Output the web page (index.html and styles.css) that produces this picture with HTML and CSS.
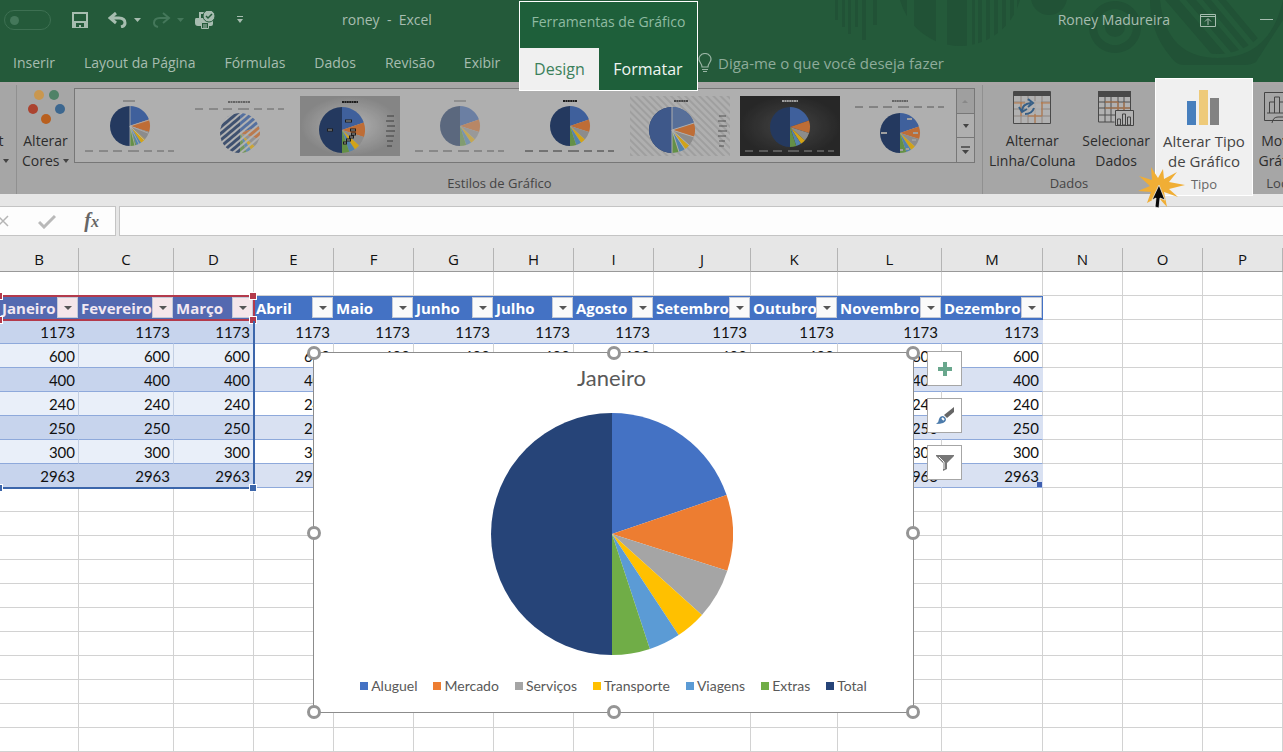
FILE: index.html
```html
<!DOCTYPE html>
<html lang="pt-BR">
<head>
<meta charset="utf-8">
<title>roney - Excel</title>
<link rel="stylesheet" href="styles.css">
</head>
<body>
<svg class="defs" aria-hidden="true">
  <defs>
    <symbol id="pie" viewBox="0 0 100 100">
      <path d="M50 50V0A50 50 0 0 1 97.350 33.930z" fill="#4472c4"/>
      <path d="M50 50L97.350 33.930A50 50 0 0 1 97.630 65.210z" fill="#ed7d31"/>
      <path d="M50 50L97.630 65.210A50 50 0 0 1 87.160 83.460z" fill="#a5a5a5"/>
      <path d="M50 50L87.160 83.460A50 50 0 0 1 77.530 91.740z" fill="#ffc000"/>
      <path d="M50 50L77.530 91.740A50 50 0 0 1 65.640 97.490z" fill="#5b9bd5"/>
      <path d="M50 50L65.640 97.490A50 50 0 0 1 50 100z" fill="#70ad47"/>
      <path d="M50 0v100A50 50 0 0 1 50 0z" fill="#264478"/>
    </symbol>
    <symbol id="lines" viewBox="0 0 100 4">
      <path d="M5 2h8m6 0h9m5 0h9m6 0h11m5 0h8m5 0h7m4 0h6" stroke="currentColor" stroke-width="1" fill="none" opacity=".75"/>
    </symbol>
    <symbol id="side" viewBox="0 0 12 34">
      <path d="M3 2h7M2 7h8M3 12h8M2 17h9M2 22h8M3 27h6M3 32h5" stroke="currentColor" stroke-width="1" fill="none" opacity=".7"/>
    </symbol>
    <pattern id="hatch" width="5" height="5" patternUnits="userSpaceOnUse" patternTransform="rotate(-40)"><rect width="5" height="2" fill="#d0d0d0"/></pattern>
    <pattern id="hatchBg" width="5" height="5" patternUnits="userSpaceOnUse" patternTransform="rotate(45)"><rect width="5" height="2" fill="#bbb"/></pattern>
    <radialGradient id="light"><stop offset="0" stop-color="#d2d2d2"/><stop offset="1" stop-color="#9c9c9c"/></radialGradient>
    <radialGradient id="dark"><stop offset="0" stop-color="#505050"/><stop offset="1" stop-color="#2e2e2e"/></radialGradient>
  </defs>
</svg>

<header class="top">
  <svg class="deco" width="460" height="82" viewBox="0 0 460 82" aria-hidden="true">
    <defs><clipPath id="disc"><circle cx="137" cy="-16" r="62"/></clipPath><clipPath id="disc2"><circle cx="395" cy="-4" r="58"/></clipPath></defs>
    <g fill="#215236">
      <path d="M12 0h3v20h-3zM19 0h3v27h-3zM25 0h3v34h-3zM32 0h3v27h-3zM39 0h4v40h-4zM50 0h4v25h-4z"/>
      <g clip-path="url(#disc)"><path d="M74 0h10v50H74zM91 0h22v50H91zM124 0h20v50h-20zM149 0h3v50h-3zM155 0h4v50h-4zM163 0h4v50h-4zM171 0h4v50h-4zM179 0h4v50h-4zM187 0h4v50h-4zM194 0h4v50h-4z"/></g>
      <circle cx="226" cy="-3" r="18"/>
      <path fill-rule="evenodd" d="M292 1a26 26 0 1 0 .1 0zM292 9a18 18 0 1 1-.1 0z"/>
      <circle cx="292" cy="27" r="10"/>
      <path fill-rule="evenodd" d="M327 0h133v20l-27 42q-5 3-12 3h-60q-8 0-14-9-20-24-20-56zM337 0q6 58 58 58 52 0 65-58z"/>
      <g clip-path="url(#disc2)"><path d="M337-6h14l60 70h-14zM358-6h10l60 70h-10zM375-6h8l55 66h-8zM390-6h8l50 60h-8z"/></g>
    </g>
  </svg>
  <div class="top-left">
    <div class="quick">
      <button class="toggle" aria-label="Salvamento automático"></button>
      <button class="q save" aria-label="Salvar"><svg width="16" height="16" viewBox="0 0 16 16"><path d="M1 1h14v14H1z" fill="none" stroke="#a7bdb0" stroke-width="2"/><path d="M2 9h12v6H2z" fill="#a7bdb0"/><path d="M4 11h8v4H9v-2H7v2H4z" fill="#245a3a"/></svg></button>
      <button class="q undo" aria-label="Desfazer"><svg width="20" height="16" viewBox="0 0 20 16"><path d="M8 1L2 6l6 5M3 6h8q6 0 6 5 0 3-4 4" fill="none" stroke="#a7bdb0" stroke-width="3"/></svg><svg width="8" height="5" viewBox="0 0 8 5"><path d="M0 0h7L3.500 4z" fill="#a7bdb0"/></svg></button>
      <button class="q redo" aria-label="Refazer"><svg width="20" height="16" viewBox="0 0 20 16"><path d="M12 1l6 5-6 5M17 6H9q-6 0-6 5 0 3 4 4" fill="none" stroke="#44775a" stroke-width="2"/></svg><svg width="8" height="5" viewBox="0 0 8 5"><path d="M0 0h7L3.500 4z" fill="#44775a"/></svg></button>
      <button class="q print" aria-label="Visualizar impressão"><svg width="20" height="19" viewBox="0 0 20 19"><path d="M5 8V2h6" fill="none" stroke="#a7bdb0" stroke-width="2"/><path d="M1 7h17v6q0 2-2 2h-2v-3H6v3H3q-3 0-3-3V9q0-2 1-2z" fill="#a7bdb0"/><path d="M6.500 11.500h7v6h-7zM8 14h4M8 16h4" fill="#245a3a" stroke="#a7bdb0"/><circle cx="14" cy="5" r="6" fill="#a7bdb0" stroke="#245a3a"/><path d="M11 5l2 2 4-4" fill="none" stroke="#245a3a" stroke-width="1.500"/></svg></button>
      <button class="q more" aria-label="Personalizar"><svg width="6" height="8" viewBox="0 0 6 8"><path d="M0 .5h6" stroke="#a7bdb0"/><path d="M0 3h6L3 7z" fill="#a7bdb0"/></svg></button>
      <span class="doc">roney&nbsp; -&nbsp; Excel</span>
    </div>
    <nav class="tabs">
      <button>Inserir</button><button>Layout da Página</button><button>Fórmulas</button><button>Dados</button><button>Revisão</button><button>Exibir</button>
    </nav>
  </div>
  <section class="context">
    <div class="context-title">Ferramentas de Gráfico</div>
    <div class="context-tabs"><button class="active">Design</button><button>Formatar</button></div>
  </section>
  <div class="top-right">
    <div class="account">
      <span>Roney Madureira</span>
      <button aria-label="Opções da faixa"><svg width="16" height="13" viewBox="0 0 16 13"><path d="M.5.5h15v12H.5zM.5 2.500h15M8 11V5M5 7.500l3-3 3 3" fill="none" stroke="#a7bdb0"/></svg></button>
      <button aria-label="Minimizar"><svg width="13" height="2" viewBox="0 0 13 2"><path d="M0 .5h13" stroke="#a7bdb0"/></svg></button>
    </div>
    <button class="tell"><svg width="14" height="20" viewBox="0 0 14 20"><path d="M4 14q0-2-2-5Q0 6 2 3q2-2.500 5-2.500T12 3q2 3 0 6-2 3-2 5zM4 16.500h6M5 18.500h4" fill="none" stroke="#9ab5a5" stroke-width="1.200"/></svg>Diga-me o que você deseja fazer</button>
  </div>
</header>

<section class="ribbon">
  <div class="group cut-left">
    <button class="big"><span>Layout</span><span>Rápido <i class="caret"></i></span></button>
  </div>
  <div class="group styles">
    <div class="tools">
      <button class="big colors"><svg width="38" height="36" viewBox="0 0 38 36"><circle cx="12" cy="5" r="5" fill="#c9974f"/><circle cx="27" cy="5" r="5" fill="#4f8267"/><circle cx="6" cy="19" r="5" fill="#ab432f"/><circle cx="33" cy="19" r="5" fill="#3c678f"/><circle cx="19" cy="29" r="5" fill="#b85f1e"/></svg><span>Alterar</span><span>Cores <i class="caret"></i></span></button>
      <div class="gallery">
        <button aria-label="Estilo 1"><svg viewBox="0 0 100 60"><path d="M43 5h12" stroke="#777"/><use href="#pie" x="10" y="10" width="80" height="40"/><path d="M50 30V10M50 30l19-6M50 30l18 7M50 30l14 14M50 30l9 18M50 30l5 20M50 30v20" stroke="#d0d0d0" stroke-width=".8"/><use href="#lines" y="53" width="100" height="4" color="#555"/></svg></button>
        <button aria-label="Estilo 2"><svg viewBox="0 0 100 60"><path d="M38 6h22" stroke="#777" stroke-width="2" stroke-dasharray="2 .5"/><use href="#lines" y="11" width="100" height="4" color="#555"/><use href="#pie" x="10" y="17" width="80" height="40" opacity=".8"/><circle cx="50" cy="37" r="20.500" fill="url(#hatch)"/></svg></button>
        <button aria-label="Estilo 3"><svg viewBox="0 0 100 60"><path d="M0 0h100v60H0z" fill="url(#light)"/><path d="M42 6h16" stroke="#222" stroke-width="2" stroke-dasharray="2 .4"/><use href="#pie" x="19" y="11" width="46" height="46"/><path d="M27 34h6M45 25h7M50 34h6M51 38h5M49 41h5M46 44h5M43 47h4" stroke="#222" stroke-width="3" fill="none"/><path d="M28 34h4M46 25h5M51 34h4M52 38h3M50 41h3M47 44h3M44 47h2" stroke="#bbb" fill="none"/><use href="#side" x="84" y="18" width="12" height="34" color="#222"/></svg></button>
        <button aria-label="Estilo 4" class="faded"><svg viewBox="0 0 100 60"><path d="M44 5h12" stroke="#555"/><use href="#pie" x="10" y="10" width="80" height="40"/><use href="#lines" y="53" width="100" height="4" color="#000"/></svg></button>
        <button aria-label="Estilo 5"><svg viewBox="0 0 100 60"><path d="M43 5h14" stroke="#222" stroke-width="2" stroke-dasharray="2 .4"/><use href="#pie" x="10" y="10" width="80" height="40"/><use href="#lines" y="53" width="100" height="4" color="#111"/></svg></button>
        <button aria-label="Estilo 6"><svg viewBox="0 0 100 60"><path d="M0 0h100v60H0z" fill="url(#hatchBg)"/><path d="M44 5h14" stroke="#555" stroke-width="2" stroke-dasharray="2 .4"/><use href="#pie" x="19" y="11" width="46" height="46"/><path d="M42 11a23 23 0 0 0 0 46z" fill="#4468ad"/><path d="M42 11a23 23 0 0 1 22 16L42 34z" fill="#6283bd"/><path d="M42 11v46M42 34l22-7M42 34l22 7M42 34l17 15M42 34l13 19M42 34l7 22" stroke="#ccc"/><use href="#side" x="86" y="18" width="12" height="34" color="#333"/></svg></button>
        <button aria-label="Estilo 7"><svg viewBox="0 0 100 60"><path d="M0 0h100v60H0z" fill="url(#dark)"/><path d="M42 5h16" stroke="#bbb" stroke-width="2" stroke-dasharray="2 .4"/><use href="#pie" x="10" y="11" width="80" height="40"/><use href="#lines" y="53" width="100" height="4" color="#ccc"/></svg></button>
        <button aria-label="Estilo 8"><svg viewBox="0 0 100 60"><path d="M42 5h16" stroke="#777" stroke-width="2" stroke-dasharray="2 .4"/><use href="#lines" y="9" width="100" height="4" color="#444"/><use href="#pie" x="10" y="17" width="80" height="40"/><path d="M31 37h6M57 23h5M63 37h5M62 44h4M56 53h3M50 54h3" stroke="#bbb" stroke-width="2"/></svg></button>
        <div class="scroller">
          <button class="off" aria-label="Acima"><svg width="7" height="4"><path d="M0 4h6L3 1z" fill="#888"/></svg></button>
          <button aria-label="Abaixo"><svg width="6" height="4"><path d="M0 0h6L3 4z" fill="#444"/></svg></button>
          <button aria-label="Mais"><svg width="9" height="8"><path d="M0 1h9" stroke="#444" stroke-width="1.500"/><path d="M1 4h7L4.500 8z" fill="#444"/></svg></button>
        </div>
      </div>
    </div>
    <div class="label">Estilos de Gráfico</div>
  </div>
  <div class="group data">
    <div class="tools">
      <button class="big wide"><svg width="38" height="36" viewBox="0 0 38 36"><path d="M1 6h36v27H1z" fill="#b1b1b1"/><path d="M1 12h36M1 19h36M1 26h36M8 6v27M15 6v27M22 6v27M29 6v27" stroke="#8d8580" fill="none"/><path d="M1 13h36M15 26h14M22 19v14M29 12v14M8 12v14" stroke="#b97846" fill="none"/><path d="M12 11h16v13H12z" fill="#b1b1b1" opacity=".8"/><path d="M.5 1.500h37v32H.5z" fill="none" stroke="#4a4a4a"/><path d="M1 1h36v5H1z" fill="#484848"/><path d="M9 21q0-7 9-8M15 9l5 4-5 4M6 17l3 5 5-3M21 18q-2 6-9 6" fill="none" stroke="#365f86" stroke-width="2"/></svg><span>Alternar</span><span>Linha/Coluna</span></button>
      <button class="big"><svg width="38" height="36" viewBox="0 0 38 36"><path d="M1 6h33v26H1z" fill="#b1b1b1"/><path d="M1 12h33M1 18h33M1 25h20M8 6v26M14 6v26M21 6v26M27 6v14" stroke="#4f4f4f" fill="none"/><path d="M8 18h26M21 12v14M8 12h13M27 12v8" stroke="#b97846" fill="none"/><path d="M1.500 2v30h16M33.500 2v18" fill="none" stroke="#484848"/><path d="M1 1h33v6H1z" fill="#484848"/><path d="M18.500 20.500h18v15h-18z" fill="#b1b1b1" stroke="#444"/><path d="M20.500 35v-6h3v6zM25.500 35V24h3v11zM30.500 35v-8h3v8z" fill="none" stroke="#444"/></svg><span>Selecionar</span><span>Dados</span></button>
    </div>
    <div class="label">Dados</div>
  </div>
  <div class="group type">
    <button class="big"><svg width="38" height="38" viewBox="0 0 38 38"><path d="M2 13h9v24H2z" fill="#477fbd"/><path d="M14 2h9v35h-9z" fill="#eeca79"/><path d="M25 10h9v27h-9z" fill="#828282"/></svg><span>Alterar Tipo</span><span>de Gráfico</span></button>
    <div class="label">Tipo</div>
    <svg class="pointer" width="48" height="42" viewBox="0 0 48 42" aria-hidden="true"><path d="M1 9l13 4-1-13 7 11 5-9 1 10 13-7-8 10 16 3-16 4 9 8-14-5 3 15-9-10-11 6 4-11-13-1 12-5z" fill="#f0ae35"/><path d="M21 18l-7 15 4-2-1 9 4 1 1-10 5 2z" fill="#080808" stroke="#fff" stroke-width=".7"/></svg>
  </div>
  <div class="group place">
    <button class="big"><svg width="36" height="36" viewBox="0 0 36 36"><path d="M.5 2.500h35v28H.5zM5.500 23V12h5v11M10.500 23V7h5v16M15.500 23V12h5v11M3 23h30M8 33q1-6 6-6h14" fill="none" stroke="#444"/></svg><span>Mover</span><span>Gráfico</span></button>
    <div class="label">Local</div>
  </div>
</section>

<section class="formula">
  <div class="fx">
    <button aria-label="Cancelar"><svg width="12" height="12" viewBox="0 0 12 12"><path d="M1 1l10 10M11 1L1 11" stroke="#b5b5b5" stroke-width="1.500"/></svg></button>
    <button aria-label="Inserir"><svg width="18" height="15" viewBox="0 0 18 15"><path d="M1 8l5 5L17 2" fill="none" stroke="#b9b9b9" stroke-width="3"/></svg></button>
    <button class="fn" aria-label="Inserir função"><em>f<small>x</small></em></button>
  </div>
  <input class="entry" aria-label="Barra de fórmulas">
</section>

<main class="sheet">
  <table class="grid">
    <colgroup><col class="wB"><col class="wC"><col><col><col><col><col><col><col class="wJ"><col class="wK"><col class="wL"><col class="wM"><col><col><col class="rest"></colgroup>
    <thead><tr id="letters"></tr></thead>
    <tbody id="cells"></tbody>
  </table>
  <div class="range range-head"><i class="tl"></i><i class="tr"></i><i class="bl"></i><i class="br"></i></div>
  <div class="range range-data"><i class="bl"></i><i class="br"></i></div>

  <figure class="chart">
    <figcaption>Janeiro</figcaption>
    <svg class="pie" viewBox="0 0 100 100" role="img" aria-label="Gráfico de pizza"><use href="#pie"/></svg>
    <ul class="legend">
      <li class="c1">Aluguel</li><li class="c2">Mercado</li><li class="c3">Serviços</li><li class="c4">Transporte</li><li class="c5">Viagens</li><li class="c6">Extras</li><li class="c7">Total</li>
    </ul>
    <i class="knob n w"></i><i class="knob n m"></i><i class="knob n e"></i><i class="knob h w"></i><i class="knob h e"></i><i class="knob s w"></i><i class="knob s m"></i><i class="knob s e"></i>
    <div class="chart-tools">
      <button aria-label="Elementos do gráfico"><svg width="14" height="14" viewBox="0 0 14 14"><path d="M5 0h4v5h5v4H9v5H5V9H0V5h5z" fill="#69a78d"/></svg></button>
      <button aria-label="Estilos do gráfico"><svg width="20" height="18" viewBox="0 0 20 18"><path d="M19 0v5l-7 6-3-3z" fill="#666"/><path d="M8.500 8.500l3 3" stroke="#fff"/><path d="M8 9q3 1 3 4-1 4-10 4 3-2 3-5 1-3 4-3z" fill="#4c7bab"/><path d="M7 11l2 2" stroke="#fff" stroke-width="2"/></svg></button>
      <button aria-label="Filtros do gráfico"><svg width="20" height="18" viewBox="0 0 20 18"><path d="M1 1h18v1l-7 7v6l-4 2V9L1 2z" fill="#777"/><path d="M4 3l5 5v7" fill="none" stroke="#fff"/></svg></button>
    </div>
  </figure>
</main>
<script src="script.js"></script>
</body>
</html>
```
FILE: styles.css
```css
* { box-sizing: border-box; }
body {
  margin: 0;
  min-height: 100vh;
  overflow: hidden;
  display: flex;
  flex-direction: column;
  font: 14px/20px "Open Sans", "Noto Sans", sans-serif;
  color: #2c2c2c;
  background: #fff;
}
button {
  font: inherit;
  color: inherit;
  background: none;
  border: 0;
  padding: 0;
  display: flex;
  align-items: center;
  justify-content: center;
}
svg { display: block; flex: none; }
.defs { position: absolute; width: 0; height: 0; }

/* Title bar and tabs */
.top {
  position: relative;
  z-index: 2;
  height: 82px;
  display: flex;
  background: #245a3a;
  color: #a7bdb0;
}
.deco { position: absolute; right: 0; top: 0; }
.top-left { flex: none; width: 519px; }
.quick { display: flex; align-items: center; height: 40px; padding-left: 4px; }
.toggle {
  width: 47px;
  height: 20px;
  border: 1px solid #3d7052;
  border-radius: 10px;
  justify-content: flex-start;
  padding-left: 5px;
}
.toggle::before { content: ""; width: 9px; height: 9px; border-radius: 50%; background: #44775a; }
.q { gap: 6px; }
.save { margin-left: 21px; }
.undo { margin-left: 20px; }
.redo { margin-left: 9px; }
.print { margin-left: 10px; }
.more { margin-left: 22px; }
.doc { margin-left: 99px; }
.tabs { display: flex; gap: 29px; height: 46px; padding-left: 13px; }
.context {
  flex: none;
  width: 179px;
  height: 90px;
  margin-top: 1px;
  border: 1px solid #fff;
  background: #1e5f3a;
  color: #f0f5f2;
  display: flex;
  flex-direction: column;
  position: relative;
}
.context-title { height: 46px; line-height: 40px; text-align: center; color: #8fbaa1; white-space: nowrap; }
.context-tabs { flex: 1; display: flex; font-size: 16px; }
.context-tabs button { flex: 1; padding-bottom: 1px; }
.context-tabs .active { flex: none; width: 79px; background: #f0f0f0; color: #3c805b; }
.top-right { flex: 1; position: relative; }
.account { display: flex; align-items: center; justify-content: flex-end; height: 40px; padding-right: 10px; gap: 30px; }
.account button:last-child { margin-left: 14px; }
.tell { margin-top: 13px; gap: 6px; color: #8eac9a; font-size: 15px; }

/* Ribbon */
.ribbon {
  display: flex;
  height: 112px;
  background: #a6a6a6;
  border-top: 3px solid #aaa6a7;
}
.group { flex: none; display: flex; flex-direction: column; border-right: 1px solid #909090; }
.tools { display: flex; flex: 1; }
.label { margin-top: auto; height: 21px; text-align: center; font-size: 13px; line-height: 20px; color: #444; }
.big { flex-direction: column; justify-content: flex-start; padding-top: 5px; white-space: nowrap; }
.big svg { margin-bottom: 5px; }
.caret { display: inline-block; border: 3px solid transparent; border-top: 4px solid #444; border-bottom: 0; vertical-align: 3px; }
.cut-left { width: 17px; overflow: hidden; align-items: flex-end; padding: 41px 7px 0 0; }
.styles { flex: 1; min-width: 0; }
.colors { flex: none; width: 57px; }
.gallery { margin-top: 3px; height: 75px; flex: 1; display: flex; gap: 10px; padding-left: 5px; border: 1px solid #777; background: #afafaf; margin-right: 7px; }
.gallery > button { flex: 1; min-width: 0; }
.gallery > button svg { width: 100px; height: 60px; filter: brightness(.85) saturate(.85); }
.gallery > .faded svg { opacity: .6; }
.scroller { width: 18px; margin-left: -4px; display: flex; flex-direction: column; border-left: 1px solid #777; }
.scroller button { flex: 1; }
.scroller button + button { border-top: 1px solid #777; }
.scroller .off { background: #9f9f9f; }
.data { width: 172px; border: 0; }
.data .tools { justify-content: space-between; padding: 0 5px 0 6px; }
.type {
  width: 98px;
  height: 118px;
  margin-top: -7px;
  border: 1px solid #fff;
  background: #f0f0f0;
  position: relative;
  z-index: 3;
  color: #444;
}
.type .big { padding-top: 9px; font-size: 15px; }
.type .label { color: #666; }
.pointer { position: absolute; left: -18px; bottom: -14px; }
.place { width: 58px; margin-right: -28px; border: 0; }

/* Formula bar */
.formula { height: 54px; padding: 12px 0; display: flex; gap: 3px; background: #e6e6e6; }
.fx { width: 116px; background: #fdfdfd; border: 1px solid #c4c4c4; border-left: 0; display: flex; align-items: center; justify-content: space-between; padding-right: 16px; }
.fx button:first-child { margin-left: -3px; }
.fn { font: italic bold 20px/24px "Liberation Serif", serif; color: #666; }
.fn small { font-size: 16px; }
.entry { flex: 1; min-width: 0; border: 1px solid #c4c4c4; border-right: 0; background: #fdfdfd; }

/* Worksheet */
.sheet { position: relative; flex: 1; }
.grid { width: 100%; table-layout: fixed; border-collapse: separate; border-spacing: 0; font: 15px/22px Lato, sans-serif; color: #111; }
.grid col { width: 80px; }
.grid .wB { width: 79px; }
.grid .wC { width: 95px; }
.grid .wJ { width: 97px; }
.grid .wK { width: 87px; }
.grid .wL { width: 104px; }
.grid .wM { width: 101px; }
.grid .rest { width: auto; }
.grid th, .grid td { height: 24px; padding: 0; border: 0 solid #d2d2d2; border-width: 0 1px 1px 0; overflow: hidden; }
.grid thead th { font: 15px/23px "Open Sans", sans-serif; background: #e6e6e6; border-color: #b4b4b4; border-bottom-color: #999; }
.grid .num { text-align: right; padding-right: 3px; border-bottom-color: #8ea9db; }
.grid .band { background: #d9e1f2; border-right-color: #d9e1f2; }
.grid .sel { background: #e9eff9; border-right-color: #c3cfe3; }
.grid .sel.band { background: #c7d4ed; border-right-color: #c7d4ed; }
.grid .head { background: #4472c4; border-color: #4472c4; color: #fff; font: 700 15px/22px "Open Sans", sans-serif; }
.grid .head.sel { background: #5469b0; border-color: #5469b0; color: #f2e8f2; }
.field { display: flex; align-items: center; height: 23px; }
.field span { flex: 1; min-width: 0; overflow: hidden; text-align: left; padding-left: 2px; white-space: nowrap; }
.field button { width: 21px; height: 21px; background: #fafafa; border: 1px solid #c3cad8; }
.sel .field button { background: #f5e6ea; }
.field button::before { content: ""; border: 4px solid transparent; border-top-color: #555; border-bottom: 0; }
.range { position: absolute; left: -2px; width: 257px; border: 2px solid #b33a4c; pointer-events: none; }
.range-head { top: 47px; height: 26px; }
.range-data { top: 73px; height: 168px; border-color: #3c66ab; border-top: 0; }
.range i { position: absolute; width: 6px; height: 6px; background: #b33a4c; outline: 1px solid #fff; }
.range-data i { background: #3c66ab; }
.range .tl, .range .tr { top: -4px; }
.range .bl, .range .br { bottom: -4px; }
.range .tl, .range .bl { left: -4px; }
.range .tr, .range .br { right: -3px; }
.corner { position: relative; }
.corner::after { content: ""; position: absolute; right: 0; bottom: 0; width: 5px; height: 5px; background: #3f5fb0; }

/* Chart object */
.chart {
  position: absolute;
  left: 313px;
  top: 104px;
  width: 601px;
  height: 361px;
  margin: 0;
  border: 1px solid #8c8c8c;
  background: #fff;
  display: flex;
  flex-direction: column;
  align-items: center;
  justify-content: space-between;
  padding: 11px 0 16px;
  color: #595959;
  font-family: Lato, sans-serif;
}
.chart figcaption { font-size: 22px; line-height: 28px; padding-right: 4px; }
.pie { width: 242px; height: 242px; margin-right: 4px; }
.legend { display: flex; gap: 16px; list-style: none; margin: 0; padding: 0; font-size: 14px; line-height: 20px; }
.legend li { display: flex; align-items: center; gap: 3px; }
.legend li::before { content: ""; width: 8px; height: 8px; background: currentColor; }
.legend .c1::before { background: #4472c4; }
.legend .c2::before { background: #ed7d31; }
.legend .c3::before { background: #a5a5a5; }
.legend .c4::before { background: #ffc000; }
.legend .c5::before { background: #5b9bd5; }
.legend .c6::before { background: #70ad47; }
.legend .c7::before { background: #264478; }
.knob { position: absolute; width: 14px; height: 14px; margin: -7px; border: 3px solid #959595; border-radius: 50%; background: #fff; }
.n { top: 0; }
.h { top: 50%; }
.s { top: 100%; }
.w { left: 0; }
.m { left: 50%; }
.e { left: 100%; }
.chart-tools { position: absolute; left: 613px; top: -2px; display: grid; gap: 12px; }
.chart-tools button { width: 35px; height: 35px; background: #fff; border: 1px solid #a6a6a6; }
```
FILE: script.js
```js
const letters = "BCDEFGHIJKLMNOP".split("");
const months = ["Janeiro", "Fevereiro", "Março", "Abril", "Maio", "Junho", "Julho", "Agosto", "Setembro", "Outubro", "Novembro", "Dezembro"];
const values = [1173, 600, 400, 240, 250, 300, 2963];
const rowCount = 20;

document.getElementById("letters").innerHTML = letters.map(l => `<th scope="col">${l}</th>`).join("");

function cell(row, col) {
  if (col >= months.length || row < 1 || row > values.length + 1) return "<td></td>";
  const selected = col < 3 ? " sel" : "";
  if (row === 1) {
    return `<th scope="col" class="head${selected}"><div class="field"><span>${months[col]}</span><button aria-label="Filtrar ${months[col]}"></button></div></th>`;
  }
  const i = row - 2;
  const band = i % 2 === 0 ? " band" : "";
  const corner = i === values.length - 1 && col === months.length - 1 ? " corner" : "";
  return `<td class="num${band}${selected}${corner}">${values[i]}</td>`;
}

let html = "";
for (let r = 0; r < rowCount; r++) {
  html += "<tr>" + letters.map((_, c) => cell(r, c)).join("") + "</tr>";
}
document.getElementById("cells").innerHTML = html;
```
